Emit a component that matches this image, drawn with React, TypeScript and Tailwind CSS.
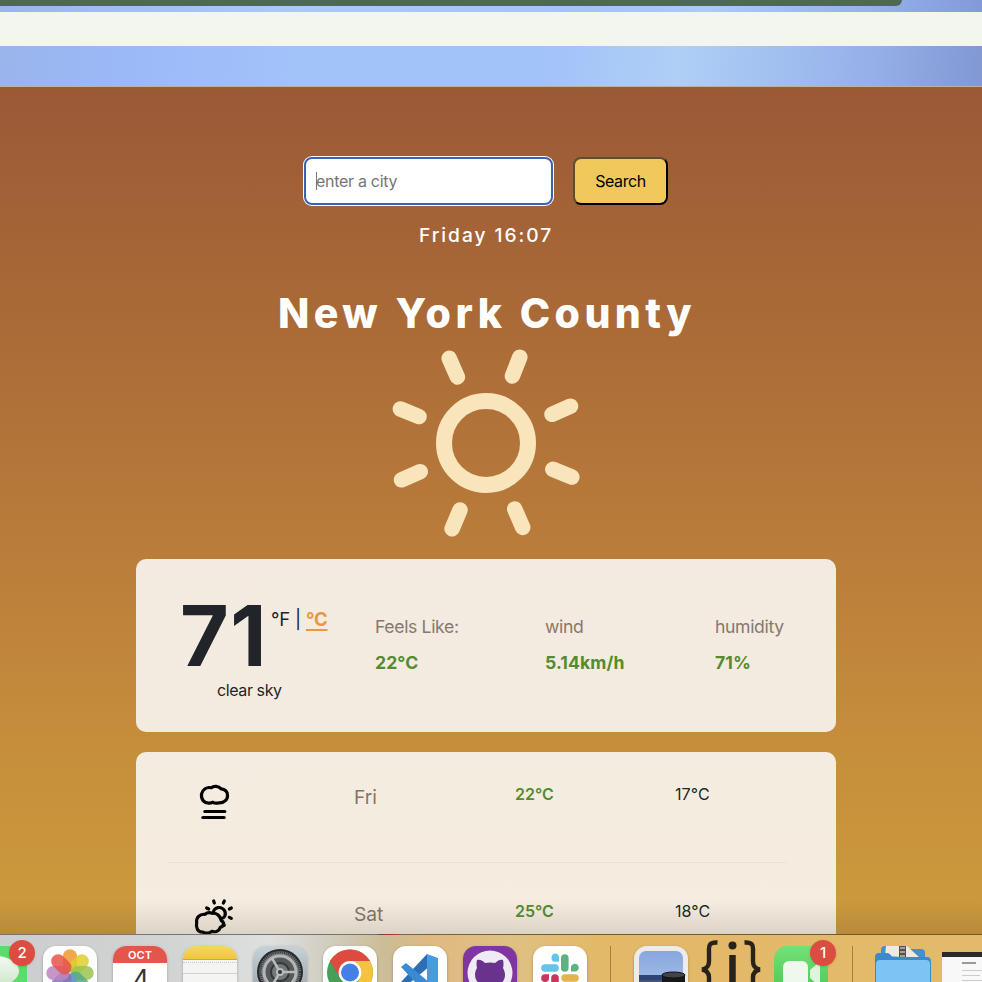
import React from "react";

function SunIcon() {
  return (
    <svg className="h-[188px] w-[188px]" viewBox="392 349 188 188" fill="none" stroke="#f8e5bc" strokeLinecap="round">
      <circle cx="486" cy="443" r="42" strokeWidth="16" />
      <path
        strokeWidth="15.5"
        d="M519.8 357.2 512.4 376M449.2 358.3 457.4 377M400.4 409 419 416.6M401.5 479.8 420.2 471.7M460 510 452.1 528.8M514.7 509 522.7 527.4M570.5 406.2 552 414.3M552.8 469.3 571.8 477"
      />
    </svg>
  );
}

function CloudFogIcon() {
  return (
    <svg className="h-[40px] w-[40px]" viewBox="104.5 65.5 120 120" fill="none" stroke="#000" strokeWidth="9.6" strokeLinecap="round" strokeLinejoin="round">
      <path d="M153 83C140 79 127 88 124 102C122 119 133 130 147 129C151 129 154 128 158 126C163 130 170 129 176 128C193 129 203 117 202 105C202 94 194 87 183 86C175 77 161 76 153 83Z" />
      <path d="M134 154H194M128 172H192" />
    </svg>
  );
}

function CloudSunIcon() {
  return (
    <svg className="-mt-[2px] h-[44px] w-[44px]" viewBox="96 413 132 132" fill="none" stroke="#000" strokeWidth="9.6" strokeLinecap="round" strokeLinejoin="round">
      <path d="M135 465C119 463 108 475 110 490C107 505 113 519 128 518C134 524 149 522 155 516C168 520 178 514 181 504C193 500 193 488 184 484C181 469 169 460 157 462C149 459 141 460 135 465Z" />
      <path d="M160 459C163 442 184 440 193 453C200 466 194 476 183 478" />
      <path d="M161 425 163 431M193 425 190 431M140 446 146 449M214 446 208 449M208 474 214 477M191 494 193 498" />
    </svg>
  );
}

function Badge({ n }: { n: number }) {
  return (
    <span className="absolute -top-[6px] -right-[8px] flex h-[26px] w-[26px] items-center justify-center rounded-full bg-[#dc4c40] text-[15px] font-medium text-white shadow">
      {n}
    </span>
  );
}

const tile = "h-[54px] w-[54px] shrink-0 overflow-hidden rounded-[13px] shadow-[0_1px_3px_#0004]";

function PhotosIcon() {
  const petals = [
    ["#f0982e", 0],
    ["#dfcf2d", 45],
    ["#9bc354", 90],
    ["#56a987", 135],
    ["#6799cc", 180],
    ["#8275b5", 225],
    ["#bc83c0", 270],
    ["#e5534a", 315],
  ] as const;
  return (
    <div className={tile}>
      <svg viewBox="0 0 54 54" className="bg-[#fdfdfd]">
        {petals.map(([color, angle]) => (
          <rect key={angle} x="20" y="3.3" width="14" height="23" rx="7" fill={color} fillOpacity="0.85" transform={`rotate(${angle} 27 27)`} />
        ))}
      </svg>
    </div>
  );
}

function SettingsIcon() {
  return (
    <div className={tile}>
      <svg viewBox="0 0 54 54" className="bg-linear-to-b from-[#c5d2d8] to-[#98a0a5]" fill="none">
        <circle cx="27" cy="26" r="22" fill="#777b7d" stroke="#27292a" strokeWidth="2" />
        <circle cx="27" cy="26" r="20" stroke="#303335" strokeWidth="3" strokeDasharray="1 1" />
        <circle cx="27" cy="26" r="16" fill="#55595b" stroke="#b3b6b7" strokeWidth="3" />
        <circle cx="27" cy="26" r="9" fill="#737779" stroke="#323638" strokeWidth="2" />
        <path d="M27 26H44M27 26 18.5 11.3M27 26 18.5 40.7" stroke="#b8bbbc" strokeWidth="2.5" />
        <circle cx="27" cy="26" r="3" fill="#303335" stroke="#b8bbbc" strokeWidth="2" />
      </svg>
    </div>
  );
}

function ChromeIcon() {
  return (
    <div className={tile}>
      <svg viewBox="0 0 54 54" className="bg-white">
        <circle cx="27" cy="26.5" r="23" fill="#45a056" />
        <path d="M27 26.5 7.1 15A23 23 0 0 1 46.9 15H27Z" fill="#dd4b3e" />
        <path d="M7.1 15 17 32 27 26.5 27 15Z" fill="#dd4b3e" />
        <path d="M27 15H46.9A23 23 0 0 1 27 49.5L37 32Z" fill="#f3c23f" />
        <circle cx="27" cy="26.5" r="11.4" fill="#fff" />
        <circle cx="27" cy="26.5" r="9" fill="#4280e5" />
      </svg>
    </div>
  );
}

function VsCodeIcon() {
  return (
    <div className={tile}>
      <svg viewBox="0 0 54 54" className="bg-white">
        <path d="M34 8 37 20 13 40 8 36Z" fill="#2d6fb5" />
        <path d="M8 21 13 17 37 37 35 50Z" fill="#3b8bd2" />
        <path d="M34 8 45 12V46L34 51Z" fill="#489be0" />
      </svg>
    </div>
  );
}

function GithubIcon() {
  return (
    <div className={tile}>
      <svg viewBox="0 0 54 54" className="bg-[#7f36a0]">
        <circle cx="27" cy="27" r="22.5" fill="#eeebf4" />
        <path d="M14 14C17 13 20 15 22 17Q27 16 32 17C35 14 38 13 40 14Q41 18 40 22C44 29 42 37 34 39V49H21V39C12 38 10 28 14 22Q13 18 14 14Z" fill="#68328d" />
      </svg>
    </div>
  );
}

function SlackIcon() {
  return (
    <div className={tile}>
      <svg viewBox="0 0 54 54" className="bg-white" strokeWidth="7.6" strokeLinecap="round">
        <path d="M12 22H22" stroke="#65c3e7" />
        <path d="M18.5 12A3.8 3.8 0 1 1 26 12V15.8H22A3.8 3.8 0 0 1 18.5 12Z" fill="#65c3e7" />
        <path d="M31.8 12V22" stroke="#5cb380" />
        <path d="M38 25.5V22A3.9 3.9 0 1 1 42 25.5Z" fill="#5cb380" />
        <path d="M32 32H42" stroke="#e2b44b" />
        <path d="M22 32V42" stroke="#ca345d" />
        <path d="M16 28.2V32A3.9 3.9 0 1 1 12 28.2Z" fill="#ca345d" />
      </svg>
    </div>
  );
}

function PreviewIcon() {
  return (
    <div className={tile}>
      <svg viewBox="0 0 54 54">
        <defs>
          <linearGradient id="sky" x1="0" y1="0" x2="0" y2="1">
            <stop offset="0" stopColor="#87a6de" />
            <stop offset="1" stopColor="#b3cdee" />
          </linearGradient>
        </defs>
        <rect width="54" height="54" fill="#ececec" />
        <rect x="5" y="5" width="44" height="54" rx="7" fill="url(#sky)" />
        <rect x="5" y="29" width="44" height="25" fill="#2d4479" />
        <path d="M5 34H29V54H5Z" fill="#4a5470" />
        <path d="M28 29V54H51V29Z" fill="#171819" />
        <ellipse cx="39.5" cy="29" rx="11.5" ry="3" fill="#414446" stroke="#111" />
      </svg>
    </div>
  );
}

function BracesIcon() {
  return (
    <svg className="-mt-[8px] h-[62px] w-[60px] shrink-0" viewBox="701 938 60 62" fill="none" stroke="#27231b" strokeWidth="4.4">
      <path d="M717.5 942.5C710 942 708.5 945 709 951V960Q709.5 968.5 702 969.5Q709.5 970.5 709 979V988C709 996 711 997 718 997" />
      <path d="M744.5 942.5C752 942 753.5 945 753 951V960Q752.5 968.5 760 969.5Q752.5 970.5 753 979V988C753 996 751 997 744 997" />
      <circle cx="732.5" cy="945.5" r="4" fill="#27231b" stroke="none" />
      <path d="M732.5 955V997" strokeWidth="6.5" />
    </svg>
  );
}

function CameraGlyph() {
  return (
    <svg viewBox="0 0 54 54" className="h-[54px] w-[54px] shrink-0 rounded-[13px] bg-linear-to-b from-[#73e178] to-[#46c450]">
      <rect x="9" y="15" width="25" height="26" rx="6" fill="#eef8ec" />
      <path d="M36 24 43 18Q46 16 46 20V36Q46 40 43 38L36 32Z" fill="#dff3dd" />
    </svg>
  );
}

function FolderIcon() {
  return (
    <svg className="h-[54px] w-[56px] shrink-0" viewBox="875 946 56 54">
      <path d="M881 950Q881 946 885 946H894L897 949H921Q925 949 925 953V965H881Z" fill="#4690c9" />
      <path d="M885 956 886 946H907L920 958Z" fill="#eceae6" />
      <path d="M899 946H906V958H899Z" fill="#55534e" />
      <path d="M900 948H905M900 952H905M900 956H905" stroke="#bbb" strokeWidth="1.4" />
      <path d="M875 957Q875 953 879 953H887Q890 953 892 957H927Q931 957 931 962V1000H875Z" fill="#3c8ac9" />
      <path d="M876 964Q876 960 880 960H926Q930 960 930 964V1000H876Z" fill="#7dc3f3" />
    </svg>
  );
}

function Dock() {
  return (
    <div className="absolute inset-x-0 top-[934px] h-[48px] overflow-hidden bg-[linear-gradient(90deg,#cbcdce_0,#d3d4d4_180px,#dedfdf_270px,#d2d0c5_320px,#cbbd96_385px,#dfb982_430px,#dfc184_510px,#e3b968_600px,#e3b96b_982px)]">
      <div className="h-px bg-[linear-gradient(90deg,#77756f_0,#77756f_376px,#6b4a33_380px,#a83c1c_388px,#a83c1c_394px,#7c6547_400px,#785a20_580px,#785a20)]" />
      <div className="flex w-[1000px] items-start pt-[11px]">
        <div className="relative -ml-[27px] mr-[16px] h-[54px] w-[54px] shrink-0 rounded-[4px] bg-[#5ddc68]">
          <div className="mt-[10px] h-[30px] w-[46px] rounded-[50%] bg-linear-to-b from-[#f5faf2] to-[#cfe5cc]" />
          <Badge n={2} />
        </div>
        <div className="flex gap-[16px]">
          <PhotosIcon />
          <div className={tile + " bg-white text-center"}>
            <div className="h-[17px] bg-[#e2564c] text-[11px] leading-[18px] font-semibold text-white">OCT</div>
            <div className="text-[34px] leading-[37px] font-light text-[#333]">4</div>
          </div>
          <div className={tile + " bg-[#f4f4f2]"}>
            <div className="h-[14px] border-b border-[#b3a77d] bg-linear-to-b from-[#f5d75f] to-[#f0c53d]" />
            <div className="mt-[2px] border-t border-dotted border-[#c9c9c9]" />
            <div className="mt-[10px] border-t border-[#d2d2d2]" />
          </div>
          <SettingsIcon />
          <ChromeIcon />
          <VsCodeIcon />
          <GithubIcon />
          <SlackIcon />
        </div>
        <div className="ml-[23px] mr-[23px] h-[40px] w-px shrink-0 bg-[#a87f39]" />
        <PreviewIcon />
        <div className="w-[13px] shrink-0" />
        <BracesIcon />
        <div className="relative ml-[13px] shrink-0">
          <CameraGlyph />
          <Badge n={1} />
        </div>
        <div className="ml-[24px] mr-[22px] h-[40px] w-px shrink-0 bg-[#a87f39]" />
        <FolderIcon />
        <div className="mt-[6px] ml-[11px] h-[50px] w-[58px] shrink-0 bg-[#f8f8f8]">
          <div className="h-[5px] bg-[#292a2c]" />
          <div className="mt-[5px] ml-[20px] h-[2px] w-[14px] bg-[#999]" />
          <div className="mt-[6px] ml-[20px] h-px w-[20px] bg-[#ccc]" />
          <div className="mt-[4px] ml-[20px] h-px w-[18px] bg-[#ccc]" />
          <div className="mt-[4px] ml-[20px] h-px w-[20px] bg-[#ccc]" />
        </div>
      </div>
    </div>
  );
}

function Stat({ label, value }: { label: string; value: string }) {
  return (
    <div className="w-[170px] shrink-0 whitespace-nowrap text-[17.6px] leading-[36px]">
      <div className="tracking-[-0.35px] text-[#85796f]">{label}</div>
      <div className="font-bold tracking-[0.1px] text-[#558b2f]">{value}</div>
    </div>
  );
}

function ForecastRow({ icon, day, high, low }: { icon: React.ReactNode; day: string; high: string; low: string }) {
  return (
    <div className="ml-[32px] flex h-[117px] w-[618px] items-start">
      <div className="w-[186px] pt-[30px]">{icon}</div>
      <div className="w-[161px] pt-[30px] text-[19.2px] leading-[30px] text-[#7f756c]">{day}</div>
      <div className="w-[160px] pt-[30px] text-[16px] leading-[24px] font-semibold tracking-[0px] text-[#558b2f]">{high}</div>
      <div className="pt-[30px] text-[16px] leading-[24px] tracking-[0.1px] text-[#212529]">{low}</div>
    </div>
  );
}

export default function App() {
  return (
    <div className="relative flex h-[982px] w-[982px] flex-col overflow-hidden bg-[#9b5936] font-['Inter',sans-serif]">
      <div className="h-[12px] bg-[linear-gradient(90deg,#9ab5ed,#abc9f7_30%,#a3c2f7_60%,#aacaf7_72%,#94aeea_90%,#829bd8)]">
        <div className="h-[6px] w-[902px] rounded-br-[10px] bg-[#4e6858]" />
      </div>
      <div className="h-[34px] bg-[#f2f6ee]" />
      <div className="h-[41px] border-b border-[#c3b09b] bg-[linear-gradient(95deg,#9ab5eb_0%,#9bb9f8_13%,#a2c2fa_30%,#a2c2fa_55%,#afcff6_69%,#a1c0f0_79%,#95afe8_89%,#8198d3_100%)]" />

      <main className="flex h-[895px] flex-col items-center bg-[linear-gradient(180deg,#9b5936_0px,#aa6a37_230px,#bb7d3b_470px,#c58d3b_645px,#cb983d_800px,#cb983d_895px)] pr-[10px]">
        <form className="mt-[70px] flex shrink-0 gap-[20px]">
          <div className="flex h-[48px] w-[249px] items-center rounded-[8px] border-2 border-[#3c61b5] bg-white pl-[10px] text-[16px] tracking-[-0.3px] text-[#757575] ring-1 ring-white">
            <span className="h-[18px] w-px bg-[#777]" />
            <span className="-ml-px">enter a city</span>
          </div>
          <button type="button" className="h-[48px] w-[95px] rounded-[8px] border-2 border-t-[#5e4e30] border-r-black border-b-black border-l-[#5e4e30] bg-[#f1c85b] text-[16px] tracking-[-0.4px] text-black">
            Search
          </button>
        </form>
        <div className="mt-[15px] shrink-0 text-[19.2px] leading-[30px] font-medium tracking-[1.95px] text-white">Friday 16:07</div>
        <h1 className="mt-[38px] ml-[2px] h-[61px] shrink-0 text-[41px] leading-[50px] font-extrabold tracking-[4.4px] whitespace-nowrap text-white">New York County</h1>
        <div className="h-[210px] shrink-0">
          <SunIcon />
        </div>

        <section className="flex h-[173px] w-[700px] shrink-0 rounded-[10px] bg-linear-to-b from-[#f3eae1] to-[#f4ebe0]">
          <div className="w-[239px] shrink-0 pl-[44px]">
            <div className="flex h-[119px] items-start">
              <span className="pt-[42px] text-[84px] leading-[70px] font-bold tracking-[1.5px] text-[#212529]">71</span>
              <span className="pt-[45px] pl-[3px] text-[18.5px] leading-[30px] tracking-[-0.2px] whitespace-nowrap text-[#212529]">
                °F | <span className="font-bold text-[#e59a3f] underline decoration-[1.5px] underline-offset-[3px]">°C</span>
              </span>
            </div>
            <div className="ml-[37px] text-[16px] leading-[24px] tracking-[-0.4px] text-[#212529]">clear sky</div>
          </div>
          <div className="flex pt-[50px]">
            <Stat label="Feels Like:" value="22°C" />
            <Stat label="wind" value="5.14km/h" />
            <Stat label="humidity" value="71%" />
          </div>
        </section>

        <section className="mt-[20px] h-[260px] w-[700px] shrink-0 rounded-t-[10px] bg-linear-to-b from-[#f5ece1] to-[#f6eddf]">
          <div>
            <ForecastRow icon={<div className="ml-[27px]"><CloudFogIcon /></div>} day="Fri" high="22°C" low="17°C" />
            <div className="-mt-[7px] mb-[6px] ml-[32px] h-px w-[618px] bg-[#e9e1d6]" />
            <ForecastRow icon={<div className="ml-[24px]"><CloudSunIcon /></div>} day="Sat" high="25°C" low="18°C" />
          </div>
        </section>
      </main>
      <div className="pointer-events-none absolute inset-x-0 top-[900px] h-[34px] bg-linear-to-b from-transparent to-[#47413826]" />
      <Dock />
    </div>
  );
}
